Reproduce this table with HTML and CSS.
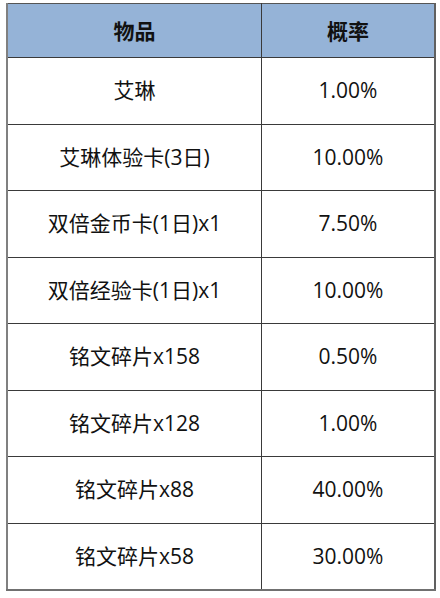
FILE: index.html
```html
<!DOCTYPE html>
<html lang="zh-CN">
<head>
<meta charset="utf-8">
<link rel="stylesheet" href="styles.css">
</head>
<body>
<div class="wrap">
<table class="rates">
  <thead>
    <tr><th class="c1">物品</th><th class="c2">概率</th></tr>
  </thead>
  <tbody>
    <tr><td>艾琳</td><td>1.00%</td></tr>
    <tr><td>艾琳体验卡(3日)</td><td>10.00%</td></tr>
    <tr><td>双倍金币卡(1日)x1</td><td>7.50%</td></tr>
    <tr><td>双倍经验卡(1日)x1</td><td>10.00%</td></tr>
    <tr><td>铭文碎片x158</td><td>0.50%</td></tr>
    <tr><td>铭文碎片x128</td><td>1.00%</td></tr>
    <tr><td>铭文碎片x88</td><td>40.00%</td></tr>
    <tr><td>铭文碎片x58</td><td>30.00%</td></tr>
  </tbody>
</table>
</div>
</body>
</html>
```

FILE: styles.css
```css
html, body {
  margin: 0;
  padding: 0;
  background: #ffffff;
}
.wrap {
  padding: 3px 0 0 6px;
}
.rates {
  border-collapse: collapse;
  width: 430px;
  table-layout: fixed;
  font-family: "Open Sans", "Noto Sans CJK SC", sans-serif;
  font-size: 21px;
  color: #111;
}
.rates th, .rates td {
  border: 1px solid #3a3a3a;
  text-align: center;
  vertical-align: middle;
  padding: 0;
  line-height: 1.2;
}
.rates th {
  background: #95b3d7;
  font-weight: bold;
  font-family: "Noto Sans CJK SC", sans-serif;
  font-size: 21px;
  height: 53px;
  border-top: 1px solid #555;
}
.rates th.c1 { width: 253px; }
.rates td { height: 65.5px; }
.rates tr > :first-child { border-left: 2px solid #808080; }
.rates tr > :last-child { border-right: 2px solid #606060; }
.rates tbody tr:last-child td { border-bottom: 2px solid #707070; }
```
